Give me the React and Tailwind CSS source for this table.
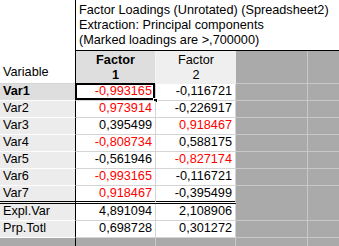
const rows = [
  { name: "Var1", a: "-0,993165", ar: true, b: "-0,116721", br: false },
  { name: "Var2", a: "0,973914", ar: true, b: "-0,226917", br: false },
  { name: "Var3", a: "0,395499", ar: false, b: "0,918467", br: true },
  { name: "Var4", a: "-0,808734", ar: true, b: "0,588175", br: false },
  { name: "Var5", a: "-0,561946", ar: false, b: "-0,827174", br: true },
  { name: "Var6", a: "-0,993165", ar: true, b: "-0,116721", br: false },
  { name: "Var7", a: "0,918467", ar: true, b: "-0,395499", br: false },
];

const totals = [
  { name: "Expl.Var", a: "4,891094", b: "2,108906" },
  { name: "Prp.Totl", a: "0,698728", b: "0,301272" },
];

const GreyTail = ({ line }) => (
  <div className={"flex flex-1 self-stretch " + (line ? "border-b border-[#c8c8c8]" : "")}>
    <div className="w-[72px] bg-[#aaaaaa] border-r border-[#c8c8c8]" />
    <div className="flex-1 bg-[#aaaaaa]" />
  </div>
);

const Row = ({ name, a, ar, b, br, bold, selected, last }) => {
  const bottom = last
    ? "border-b-[3px] border-double border-b-black "
    : "border-b ";
  return (
    <div className={"flex " + (last ? "h-[18px]" : "h-[17px]")}>
      <div
        className={
          "w-[76px] shrink-0 border-r border-r-black pl-[3px] leading-[15px] " +
          bottom +
          (last ? "" : "border-b-white ") +
          (bold ? "bg-[#dedede] font-bold" : "bg-[#ececec]")
        }
      >
        {name}
      </div>
      <div
        className={
          "relative w-[80px] shrink-0 border-r border-r-[#d4d4d4] bg-white pr-[3px] text-right leading-[15px] " +
          bottom +
          (last ? "" : "border-b-[#d4d4d4] ") +
          (ar ? "text-[#ff0000]" : "text-black")
        }
      >
        {a}
        {selected && (
          <>
            <div className="absolute -left-px -top-px right-0 bottom-0 border-2 border-black" />
            <div className="absolute -right-[3px] -bottom-[3px] h-[5px] w-[5px] bg-black border border-white" />
          </>
        )}
      </div>
      <div
        className={
          "w-[80px] shrink-0 border-r border-r-[#d4d4d4] bg-white pr-[3px] text-right leading-[15px] " +
          bottom +
          (last ? "" : "border-b-[#d4d4d4] ") +
          (br ? "text-[#ff0000]" : "text-black")
        }
      >
        {b}
      </div>
      <GreyTail line={!last} />
    </div>
  );
};

export default function App() {
  return (
    <div className="w-[339px] h-[246px] overflow-hidden bg-[#aaaaaa] font-['Liberation_Sans',Arial,sans-serif] text-[12.7px] text-black">
      <div className="flex h-[84px]">
        <div className="w-[76px] shrink-0 border-r border-black border-b border-b-[#d4d4d4] bg-white flex items-end pl-[3px] pb-[1px]">
          Variable
        </div>
        <div className="flex flex-1 flex-col">
          <div className="h-[51px] border-b border-black bg-white pl-[3px] pt-[3px] leading-[15px]">
            <div>Factor Loadings (Unrotated) (Spreadsheet2)</div>
            <div>Extraction: Principal components</div>
            <div>(Marked loadings are &gt;,700000)</div>
          </div>
          <div className="flex flex-1">
            <div className="w-[80px] shrink-0 border-r border-[#f4f4f4] bg-[#dedede] text-center font-bold leading-[15px] pt-[2px]">
              <div>Factor</div>
              <div>1</div>
            </div>
            <div className="w-[80px] shrink-0 bg-[#efefef] text-center leading-[15px] pt-[2px]">
              <div>Factor</div>
              <div>2</div>
            </div>
            <GreyTail line />
          </div>
        </div>
      </div>
      {rows.map((r, i) => (
        <Row
          key={r.name}
          {...r}
          bold={i === 0}
          selected={i === 0}
          last={i === rows.length - 1}
        />
      ))}
      {totals.map((r) => (
        <Row key={r.name} {...r} />
      ))}
      <div className="flex h-[20px]">
        <div className="w-[76px] shrink-0 border-r border-black bg-[#aaaaaa]" />
        <div className="w-[80px] shrink-0 border-r border-[#c8c8c8] bg-[#aaaaaa]" />
        <div className="w-[80px] shrink-0 border-r border-[#c8c8c8] bg-[#aaaaaa]" />
        <GreyTail />
      </div>
    </div>
  );
}
